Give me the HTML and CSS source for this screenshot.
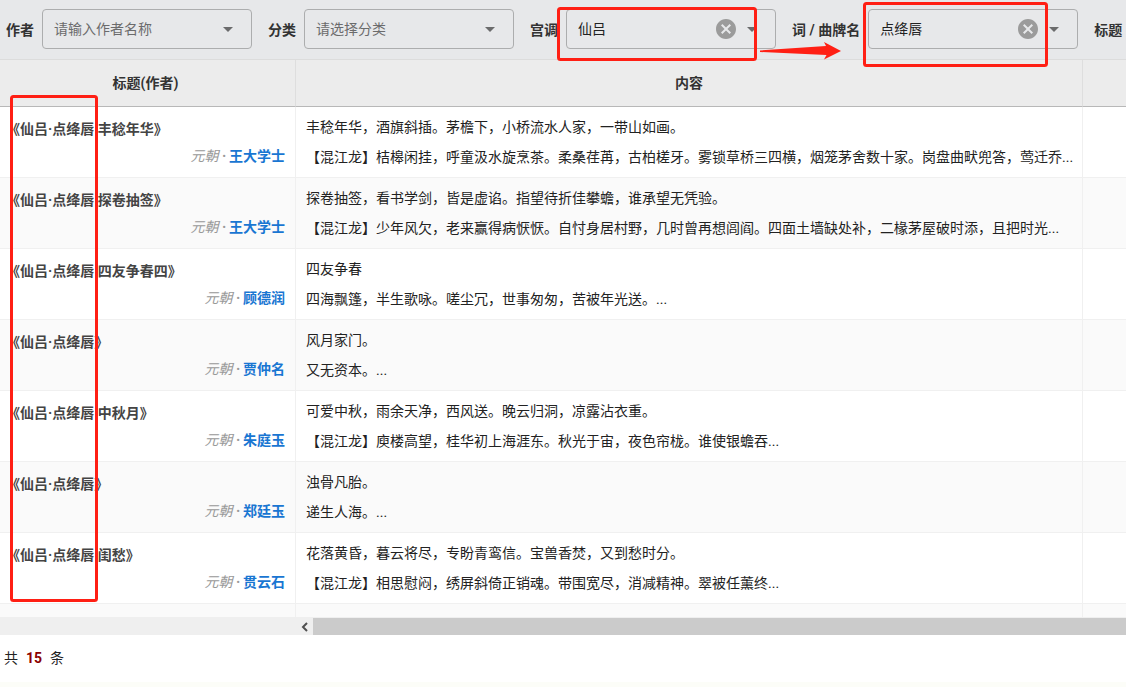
FILE: index.html
```html
<!DOCTYPE html>
<html lang="zh-CN">
<head>
<meta charset="utf-8">
<meta name="viewport" content="width=device-width, initial-scale=1">
<title>仙吕·点绛唇</title>
<link rel="stylesheet" href="styles.css">
</head>
<body>
<div class="page">
  <form class="filters">
    <div class="field">
      <label class="field-label" for="author">作者</label>
      <div class="combo">
        <input class="combo-control" id="author" type="text" placeholder="请输入作者名称">
        <svg class="combo-arrow" viewBox="0 0 24 24" aria-hidden="true"><path d="M7 10l5 5 5-5z"/></svg>
      </div>
    </div>
    <div class="field">
      <label class="field-label" for="category">分类</label>
      <div class="combo">
        <select class="combo-control is-empty" id="category"><option>请选择分类</option></select>
        <svg class="combo-arrow" viewBox="0 0 24 24" aria-hidden="true"><path d="M7 10l5 5 5-5z"/></svg>
      </div>
    </div>
    <div class="field">
      <label class="field-label" for="mode">宫调</label>
      <div class="combo">
        <select class="combo-control" id="mode"><option>仙吕</option></select>
        <button class="combo-clear" type="button" aria-label="清除宫调"><svg viewBox="2 2 20 20" aria-hidden="true"><path d="M12 2C6.47 2 2 6.47 2 12s4.47 10 10 10 10-4.47 10-10S17.53 2 12 2zm5 13.59L15.59 17 12 13.41 8.41 17 7 15.59 10.59 12 7 8.41 8.41 7 12 10.59 15.59 7 17 8.41 13.41 12 17 15.59z"/></svg></button>
        <svg class="combo-arrow" viewBox="0 0 24 24" aria-hidden="true"><path d="M7 10l5 5 5-5z"/></svg>
      </div>
    </div>
    <div class="field">
      <label class="field-label" for="tune">词 / 曲牌名</label>
      <div class="combo">
        <select class="combo-control" id="tune"><option>点绛唇</option></select>
        <button class="combo-clear" type="button" aria-label="清除曲牌名"><svg viewBox="2 2 20 20" aria-hidden="true"><path d="M12 2C6.47 2 2 6.47 2 12s4.47 10 10 10 10-4.47 10-10S17.53 2 12 2zm5 13.59L15.59 17 12 13.41 8.41 17 7 15.59 10.59 12 7 8.41 8.41 7 12 10.59 15.59 7 17 8.41 13.41 12 17 15.59z"/></svg></button>
        <svg class="combo-arrow" viewBox="0 0 24 24" aria-hidden="true"><path d="M7 10l5 5 5-5z"/></svg>
      </div>
    </div>
    <div class="field">
      <label class="field-label" for="title">标题</label>
      <div class="combo"><input class="combo-control" id="title" type="text"></div>
    </div>
  </form>

  <div class="table-area">
    <table class="poems">
      <colgroup><col class="col-title"><col class="col-content"><col></colgroup>
      <thead>
        <tr><th class="title-head" scope="col">标题(作者)</th><th scope="col">内容</th><th></th></tr>
      </thead>
      <tbody>
        <tr>
          <td class="title-cell"><div class="title">《仙吕·点绛唇 丰稔年华》</div><div class="byline"><i class="era">元朝 <b>·</b></i><a class="author" href="#">王大学士</a></div></td>
          <td class="content-cell"><div>丰稔年华，酒旗斜插。茅檐下，小桥流水人家，一带山如画。</div><div>【混江龙】桔槔闲挂，呼童汲水旋烹茶。柔桑荏苒，古柏槎牙。雾锁草桥三四横，烟笼茅舍数十家。岗盘曲畎兜答，莺迁乔...</div></td>
          <td></td>
        </tr>
        <tr>
          <td class="title-cell"><div class="title">《仙吕·点绛唇 探卷抽签》</div><div class="byline"><i class="era">元朝 <b>·</b></i><a class="author" href="#">王大学士</a></div></td>
          <td class="content-cell"><div>探卷抽签，看书学剑，皆是虚谄。指望待折佳攀蟾，谁承望无凭验。</div><div>【混江龙】少年风欠，老来赢得病恹恹。自忖身居村野，几时曾再想闾阎。四面土墙缺处补，二椽茅屋破时添，且把时光...</div></td>
          <td></td>
        </tr>
        <tr>
          <td class="title-cell"><div class="title">《仙吕·点绛唇 四友争春四》</div><div class="byline"><i class="era">元朝 <b>·</b></i><a class="author" href="#">顾德润</a></div></td>
          <td class="content-cell"><div>四友争春</div><div>四海飘篷，半生歌咏。嗟尘冗，世事匆匆，苦被年光送。...</div></td>
          <td></td>
        </tr>
        <tr>
          <td class="title-cell"><div class="title">《仙吕·点绛唇》</div><div class="byline"><i class="era">元朝 <b>·</b></i><a class="author" href="#">贾仲名</a></div></td>
          <td class="content-cell"><div>风月家门。</div><div>又无资本。...</div></td>
          <td></td>
        </tr>
        <tr>
          <td class="title-cell"><div class="title">《仙吕·点绛唇 中秋月》</div><div class="byline"><i class="era">元朝 <b>·</b></i><a class="author" href="#">朱庭玉</a></div></td>
          <td class="content-cell"><div>可爱中秋，雨余天净，西风送。晚云归洞，凉露沾衣重。</div><div>【混江龙】庾楼高望，桂华初上海涯东。秋光于宙，夜色帘栊。谁使银蟾吞...</div></td>
          <td></td>
        </tr>
        <tr>
          <td class="title-cell"><div class="title">《仙吕·点绛唇》</div><div class="byline"><i class="era">元朝 <b>·</b></i><a class="author" href="#">郑廷玉</a></div></td>
          <td class="content-cell"><div>浊骨凡胎。</div><div>递生人海。...</div></td>
          <td></td>
        </tr>
        <tr>
          <td class="title-cell"><div class="title">《仙吕·点绛唇 闺愁》</div><div class="byline"><i class="era">元朝 <b>·</b></i><a class="author" href="#">贯云石</a></div></td>
          <td class="content-cell"><div>花落黄昏，暮云将尽，专盼青鸾信。宝兽香焚，又到愁时分。</div><div>【混江龙】相思慰闷，绣屏斜倚正销魂。带围宽尽，消减精神。翠被任薰终...</div></td>
          <td></td>
        </tr>
        <tr class="row-blank"><td></td><td></td><td></td></tr>
      </tbody>
    </table>
  </div>

  <div class="scrollbar">
    <div class="scroll-frozen"></div>
    <button class="scroll-left" type="button" aria-label="向左滚动"><svg viewBox="0 0 8 10" aria-hidden="true"><path d="M6 1L2 5l4 4"/></svg></button>
    <div class="scroll-thumb"></div>
  </div>
  <footer class="summary">共<b class="count">15</b>条</footer>
  <div class="page-end"></div>

  <svg class="marks" aria-hidden="true">
    <rect x="558.500" y="8.500" width="197" height="51" rx="2"/>
    <rect x="864.500" y="3.500" width="182" height="62" rx="2"/>
    <rect x="11.500" y="96.500" width="85" height="504" rx="2"/>
    <path d="M760 50.500L826 46l-2-4 17 9-17 8.500 2.500-4.500L760 52z"/>
  </svg>
</div>
</body>
</html>
```
FILE: styles.css
```css
* {
  box-sizing: border-box;
}

body {
  margin: 0;
  background: #fff;
  color: #222;
  font-family: Roboto, "Noto Sans CJK SC", sans-serif;
  font-size: 14px;
  text-spacing-trim: space-all;
}

.page {
  position: relative;
  display: flex;
  flex-direction: column;
  height: 100vh;
  overflow: hidden;
}

/* Filter bar */
.filters {
  flex: none;
  display: flex;
  gap: 16px;
  padding: 9px 6px 10px;
  overflow: hidden;
  background: #e7e8ea;
  border-bottom: 1px solid #dcdcdc;
}

.field {
  flex: none;
  display: flex;
  align-items: center;
  gap: 8px;
}

.field-label {
  color: #333;
  font-weight: 700;
}

.combo {
  display: flex;
  align-items: center;
  gap: 4px;
  width: 210px;
  height: 40px;
  padding: 0 11px;
  border: 1px solid #acadae;
  border-radius: 4px;
}

.combo-control {
  flex: 1;
  min-width: 0;
  height: 38px;
  padding: 0;
  border: 0;
  outline: 0;
  background: transparent;
  color: #222;
  font: inherit;
  appearance: none;
}

.combo-control.is-empty,
.combo-control::placeholder {
  color: #6b6b6c;
  opacity: 1;
}

.combo-arrow {
  flex: none;
  width: 24px;
  height: 24px;
  fill: #6b6b6c;
}

.combo-clear {
  flex: none;
  width: 20px;
  height: 20px;
  padding: 0;
  border: 0;
  background: none;
}

.combo-clear svg {
  display: block;
  width: 20px;
  height: 20px;
  fill: #9b9b9b;
}

/* Poem table */
.table-area {
  flex: 1;
  min-height: 0;
  overflow: hidden;
}

.poems {
  width: 100%;
  table-layout: fixed;
  border-collapse: separate;
  border-spacing: 0;
}

.col-title {
  width: 296px;
}

.col-content {
  width: 787px;
}

.poems th {
  height: 47px;
  padding: 0 0 2px;
  background: #ececec;
  border-right: 1px solid #dedede;
  border-bottom: 1px solid #b8b8b8;
  color: #333;
  font-weight: 700;
}

.poems .title-head {
  padding-right: 4px;
}

.poems td {
  padding: 0;
  border-right: 1px solid #f0f0f0;
  border-bottom: 1px solid #f0f0f0;
  white-space: nowrap;
}

.poems th:last-child,
.poems td:last-child {
  border-right: 0;
}

.poems tbody tr:nth-child(even) {
  background: #fafafa;
}

.poems .title-cell {
  padding: 9px 10px 7px 6px;
  line-height: 27px;
}

.title {
  color: #444;
  font-weight: 700;
}

.byline {
  text-align: right;
}

.era {
  margin-right: 3px;
  color: #999;
}

.author {
  color: #1976d2;
  font-weight: 700;
  text-decoration: none;
}

.poems .content-cell {
  padding: 5px 10px;
  line-height: 30px;
}

.row-blank td {
  height: 71px;
}

/* Horizontal scroll bar */
.scrollbar {
  flex: none;
  display: flex;
  height: 18px;
  padding-top: 1px;
  background: #efefef;
}

.scroll-frozen {
  flex: none;
  width: 296px;
}

.scroll-left {
  flex: none;
  display: flex;
  align-items: center;
  justify-content: center;
  width: 17px;
  padding: 0;
  border: 0;
  background: none;
}

.scroll-left svg {
  width: 8px;
  height: 10px;
  fill: none;
  stroke: #505050;
  stroke-width: 2;
}

.scroll-thumb {
  flex: 1;
  background: #cbcbcb;
}

.summary {
  flex: none;
  padding: 0 4px;
  line-height: 47px;
}

.count {
  margin: 0 8px;
  color: #8b0000;
}

.page-end {
  flex: none;
  height: 5px;
  background: #fcfdf8;
}

/* Red annotations over the page */
.marks {
  position: absolute;
  inset: 0;
  width: 100%;
  height: 100%;
  pointer-events: none;
}

.marks rect {
  fill: none;
  stroke: #ff1f14;
  stroke-width: 3;
}

.marks path {
  fill: #ff1f14;
}
```
